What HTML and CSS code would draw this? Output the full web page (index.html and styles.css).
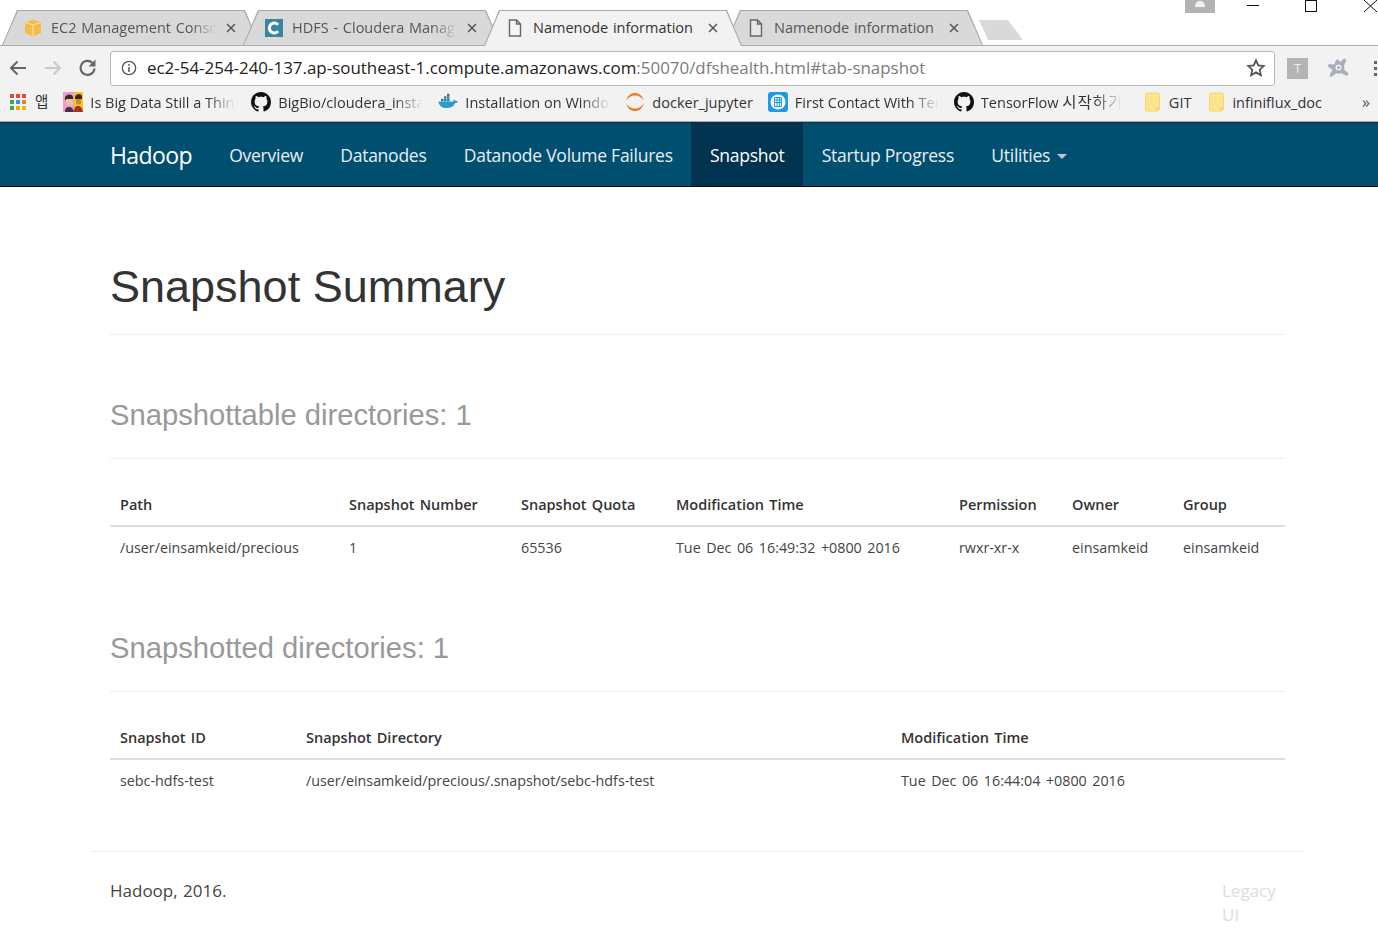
FILE: index.html
```html
<!DOCTYPE html>
<html lang="en">
<head>
    <meta charset="UTF-8">
    <meta name="viewport" content="width=device-width, initial-scale=1.0">
    <title>Namenode information</title>
    <link rel="stylesheet" href="styles.css">
</head>
<body>
    <svg class="sprites" width="0" height="0" aria-hidden="true">
        <symbol id="i-doc" viewBox="0 0 14 18">
            <path d="M1.5 1h7l4 4v12h-11z M8.5 1v4h4" fill="#fff" fill-opacity=".35" stroke="currentColor" stroke-width="1.4"/>
        </symbol>
        <symbol id="i-close" viewBox="0 0 10 10">
            <path d="M1 1l8 8M9 1l-8 8" stroke="currentColor" stroke-width="1.5"/>
        </symbol>
        <symbol id="i-github" viewBox="0 0 16 16">
            <path fill="#111" d="M8 0C3.58 0 0 3.58 0 8c0 3.54 2.29 6.53 5.47 7.59.4.07.55-.17.55-.38 0-.19-.01-.82-.01-1.49-2.01.37-2.53-.49-2.69-.94-.09-.23-.48-.94-.82-1.13-.28-.15-.68-.52-.01-.53.63-.01 1.08.58 1.23.82.72 1.21 1.87.87 2.33.66.07-.52.28-.87.51-1.07-1.78-.2-3.64-.89-3.64-3.95 0-.87.31-1.59.82-2.15-.08-.2-.36-1.02.08-2.12 0 0 .67-.21 2.2.82.64-.18 1.32-.27 2-.27.68 0 1.36.09 2 .27 1.53-1.04 2.2-.82 2.2-.82.44 1.1.16 1.92.08 2.12.51.56.82 1.27.82 2.15 0 3.07-1.87 3.75-3.65 3.95.29.25.54.73.54 1.48 0 1.07-.01 1.93-.01 2.2 0 .21.15.46.55.38A8.013 8.013 0 0016 8c0-4.42-3.58-8-8-8z"/>
        </symbol>
        <symbol id="i-folder" viewBox="0 0 16 20">
            <path d="M1.5 1h11a2 2 0 0 1 2 2v14l-2 2h-11a1 1 0 0 1-1-1V2a1 1 0 0 1 1-1z" fill="#fde58f" stroke="#f6d66e"/>
            <path d="M12 19v-3h2.500" fill="none" stroke="#eec95c"/>
        </symbol>
    </svg>

    <div class="tabstrip">
        <div class="tab">
            <svg class="favicon" viewBox="0 0 18 18">
                <path d="M9 0.500l8 3v10.500l-8 3.500L1 14V3.500z" fill="#f6b94d"/>
                <path d="M1.500 3.500L9 6l7.500-2.500M9 6v11" fill="none" stroke="#fde3a8" stroke-width="1"/>
            </svg>
            <span class="tab-title">EC2 Management Console</span>
            <svg class="tab-close"><use href="#i-close"/></svg>
        </div>
        <div class="tab">
            <svg class="favicon" viewBox="0 0 20 20">
                <rect width="20" height="20" fill="#37859e"/>
                <path d="M14.500 6.500a5.500 5.500 0 1 0 0 7" fill="none" stroke="#fff" stroke-width="3.400"/>
            </svg>
            <span class="tab-title">HDFS - Cloudera Manager</span>
            <svg class="tab-close"><use href="#i-close"/></svg>
        </div>
        <div class="tab tab-active">
            <svg class="favicon doc"><use href="#i-doc"/></svg>
            <span class="tab-title">Namenode information</span>
            <svg class="tab-close"><use href="#i-close"/></svg>
        </div>
        <div class="tab">
            <svg class="favicon doc"><use href="#i-doc"/></svg>
            <span class="tab-title">Namenode information</span>
            <svg class="tab-close"><use href="#i-close"/></svg>
        </div>
        <div class="newtab"></div>
        <div class="window-btns">
            <div class="avatar"><span></span></div>
            <svg class="win-btn" viewBox="0 0 14 13"><path d="M1 5.500h12" stroke="#111"/></svg>
            <svg class="win-btn win-max" viewBox="0 0 14 13"><rect x="1.500" y="0.500" width="11" height="11" fill="none" stroke="#111"/></svg>
            <svg class="win-btn" viewBox="0 0 14 13"><path d="M0 0l13 12M13 0L0 12" stroke="#111"/></svg>
        </div>
    </div>

    <div class="toolbar">
        <svg class="tool-icon" viewBox="0 0 20 20"><path d="M18 10H3M9.500 3.500L3 10l6.500 6.500" fill="none" stroke="#666" stroke-width="2"/></svg>
        <svg class="tool-icon" viewBox="0 0 20 20"><path d="M2 10h15M10.500 3.500L17 10l-6.500 6.500" fill="none" stroke="#c8c8c8" stroke-width="2"/></svg>
        <svg class="tool-icon" viewBox="0 0 20 20"><path d="M16.500 10.500a7 7 0 1 1-2-5.500" fill="none" stroke="#666" stroke-width="2.200"/><path d="M17.500 1.500v7h-7z" fill="#666"/></svg>
        <div class="omnibox">
            <svg class="info" viewBox="0 0 18 18"><circle cx="9" cy="9" r="7.500" fill="none" stroke="#555" stroke-width="1.500"/><path d="M9 8v5.500M9 4.500v2" stroke="#555" stroke-width="1.700"/></svg>
            <span class="url">ec2-54-254-240-137.ap-southeast-1.compute.amazonaws.com<span class="url-rest">:50070/dfshealth.html#tab-snapshot</span></span>
            <svg class="star" viewBox="0 0 20 20"><path d="M10 2.300l2.300 5.100 5.500.6-4.100 3.700 1.200 5.500L10 14.400l-4.900 2.800 1.200-5.500L2.200 8l5.500-.6z" fill="none" stroke="#555" stroke-width="1.800"/></svg>
        </div>
        <div class="ext-t">T</div>
        <svg class="ext-avast" viewBox="0 0 22 20">
            <path d="M17 0.500c1.500 0 2.500 1.500 1.800 3L17 7.500c.5 1.500.5 2.800 0 4l4 3.500c1 1.200-.3 3.200-2 2.500l-5.500-2.500c-1.500.8-3 .8-4.300.2L5 18.500c-1.500.8-3-.8-2-2.300L5.500 12 1.500 9C.3 8 1 6.200 2.500 6.300L7 6.500 9 2.500c.7-1.300 2.300-1.300 3 0l1.300 1.500z" fill="#a9adbd"/>
            <circle cx="11.500" cy="9.500" r="3" fill="#f2f2f2"/>
            <circle cx="11.500" cy="9.500" r="1.500" fill="#a9adbd"/>
        </svg>
        <div class="menu-dots"><span></span><span></span><span></span></div>
    </div>

    <div class="bookmarks">
        <svg class="apps" viewBox="0 0 16 16">
            <rect width="4" height="4" fill="#e8453c"/><rect x="6" width="4" height="4" fill="#e8453c"/><rect x="12" width="4" height="4" fill="#e8453c"/>
            <rect y="6" width="4" height="4" fill="#34a853"/><rect x="6" y="6" width="4" height="4" fill="#3d8df2"/><rect x="12" y="6" width="4" height="4" fill="#f58220"/>
            <rect y="12" width="4" height="4" fill="#34a853"/><rect x="6" y="12" width="4" height="4" fill="#f4a800"/><rect x="12" y="12" width="4" height="4" fill="#f4b400"/>
        </svg>
        <span class="bm-apps">앱</span>
        <div class="bm bm-first">
            <svg class="bm-icon" viewBox="0 0 20 20">
                <rect width="11" height="20" fill="#ee9ad0"/><rect x="11" width="9" height="20" fill="#f5c518"/>
                <path d="M2 6c0-4 7-5 8-1v3H2z" fill="#3a2a22"/>
                <path d="M3 7h7v5c-1 2.500-5 2.500-7 0z" fill="#eac0a8"/>
                <path d="M2 20c0-4 2-5 4-5s4 1 5 5z" fill="#4a3040"/>
                <path d="M12 5c1-4 7-4 7 0v2h-7z" fill="#3a2412"/>
                <path d="M13 7h5v4c-1 2-4 2-5 0z" fill="#c98a3a"/>
                <path d="M11 20c0-5 2-6 4-6s4 1 5 6z" fill="#a5301e"/>
            </svg>
            <span class="bm-text bm-cut w146">Is Big Data Still a Thing</span>
        </div>
        <div class="bm">
            <svg class="bm-icon"><use href="#i-github"/></svg>
            <span class="bm-text bm-cut w145">BigBio/cloudera_install</span>
        </div>
        <div class="bm">
            <svg class="bm-icon" viewBox="0 0 20 20">
                <path d="M0.500 9.500h14.500c.5-1.200 1.500-1.800 2-1.800.5.500.8 1 .8 1.500.8-.2 1.500 0 2 .3-.5 1.300-1.500 1.700-2.700 1.700C15.500 14.500 12.500 16 8.500 16c-5 0-7.500-2.500-8-6.500z" fill="#2f9ac8"/>
                <path d="M3 6.800h2.500v2.400H3zM6 6.800h2.500v2.400H6zM9 6.800h2.500v2.400H9zM6 4.200h2.500v2.200H6zM9 4.200h2.500v2.200H9zM9 1.700h2.500v2.200H9z" fill="#2f7f9f"/>
            </svg>
            <span class="bm-text bm-cut w145">Installation on Windows</span>
        </div>
        <div class="bm">
            <svg class="bm-icon" viewBox="0 0 20 20">
                <path d="M1.500 8.500C3-1.500 17-1.500 18.500 8.500 15 1.800 5 1.800 1.500 8.500zM1.500 11.500C3 21.500 17 21.500 18.500 11.500 15 18.200 5 18.200 1.500 11.500z" fill="#f37726"/>
            </svg>
            <span class="bm-text">docker_jupyter</span>
        </div>
        <div class="bm">
            <svg class="bm-icon" viewBox="0 0 20 20">
                <rect width="20" height="20" rx="3" fill="#1e9be8"/>
                <circle cx="10" cy="10" r="7.500" fill="#fff"/>
                <path d="M6.500 5.500h7v9h-7zM6.500 8h7M6.500 10.500h7M9 5.500v9M11.500 5.500v9" fill="none" stroke="#1e9be8"/>
            </svg>
            <span class="bm-text bm-cut w144">First Contact With TensorFlow</span>
        </div>
        <div class="bm">
            <svg class="bm-icon"><use href="#i-github"/></svg>
            <span class="bm-text bm-cut w141">TensorFlow <span class="ko">시작하기</span></span>
        </div>
        <div class="bm bm-folder">
            <svg class="bm-icon folder"><use href="#i-folder"/></svg>
            <span class="bm-text">GIT</span>
        </div>
        <div class="bm bm-folder2">
            <svg class="bm-icon folder"><use href="#i-folder"/></svg>
            <span class="bm-text">infiniflux_doc</span>
        </div>
        <span class="bm-more">»</span>
    </div>

    <nav class="navbar">
        <a class="brand">Hadoop</a>
        <a class="nav-item">Overview</a>
        <a class="nav-item">Datanodes</a>
        <a class="nav-item">Datanode Volume Failures</a>
        <a class="nav-item active">Snapshot</a>
        <a class="nav-item">Startup Progress</a>
        <a class="nav-item">Utilities <span class="caret"></span></a>
    </nav>

    <div class="container">
        <div class="page-header">
            <h1>Snapshot Summary</h1>
        </div>

        <div class="section-header">
            <h2>Snapshottable directories: 1</h2>
        </div>
        <table>
            <thead>
                <tr>
                    <th class="c-path">Path</th>
                    <th class="c-number">Snapshot Number</th>
                    <th class="c-quota">Snapshot Quota</th>
                    <th class="c-time">Modification Time</th>
                    <th class="c-perm">Permission</th>
                    <th class="c-owner">Owner</th>
                    <th>Group</th>
                </tr>
            </thead>
            <tbody>
                <tr>
                    <td>/user/einsamkeid/precious</td>
                    <td>1</td>
                    <td>65536</td>
                    <td>Tue Dec 06 16:49:32 +0800 2016</td>
                    <td>rwxr-xr-x</td>
                    <td>einsamkeid</td>
                    <td>einsamkeid</td>
                </tr>
            </tbody>
        </table>

        <div class="section-header second">
            <h2>Snapshotted directories: 1</h2>
        </div>
        <table>
            <thead>
                <tr>
                    <th class="c-id">Snapshot ID</th>
                    <th class="c-dir">Snapshot Directory</th>
                    <th>Modification Time</th>
                </tr>
            </thead>
            <tbody>
                <tr>
                    <td>sebc-hdfs-test</td>
                    <td>/user/einsamkeid/precious/.snapshot/sebc-hdfs-test</td>
                    <td>Tue Dec 06 16:44:04 +0800 2016</td>
                </tr>
            </tbody>
        </table>

        <footer class="footer">
            <p class="copyright">Hadoop, 2016.</p>
            <a class="legacy">Legacy UI</a>
        </footer>
    </div>
</body>
</html>
```

FILE: styles.css
```css
* {
    box-sizing: border-box;
}

html, body {
    overflow: hidden;
}

body {
    margin: 0;
    font-family: 'Open Sans', 'Noto Sans CJK KR', sans-serif;
    background-color: #fff;
    color: #333;
}

.sprites {
    display: block;
    height: 0;
}

/* browser tabs */
.tabstrip {
    display: flex;
    align-items: flex-end;
    height: 46px;
    padding-left: 2px;
    background-color: #fff;
    box-shadow: inset 0 -1px 0 #adadad;
}

.tab {
    position: relative;
    display: flex;
    align-items: center;
    flex: none;
    width: 258px;
    height: 35px;
    margin-bottom: 1px;
    margin-right: -17px;
    padding-left: 22px;
    color: #555;
    background-color: #a8a8a8;
    clip-path: polygon(0 100%, 15px 0, 243px 0, 100% 100%);
}

.tab::before {
    content: "";
    position: absolute;
    inset: 1px 1px 0;
    background-color: #d9d9d9;
    clip-path: polygon(0 100%, 15px 0, 241px 0, 100% 100%);
}

.tab > * {
    position: relative;
}

.tab-active {
    z-index: 1;
    height: 36px;
    margin-bottom: 0;
    padding-bottom: 1px;
    color: #333;
}

.tab-active::before {
    background-color: #f2f2f2;
}

.favicon {
    flex: none;
    width: 18px;
    height: 18px;
}

.favicon.doc {
    width: 14px;
    color: #666;
    margin: 0 2px;
}

.tab-title {
    flex: none;
    width: 165px;
    margin-left: 9px;
    font-size: 14.5px;
    word-spacing: 1px;
    white-space: nowrap;
    overflow: hidden;
    -webkit-mask-image: linear-gradient(to right, #000 140px, transparent 165px);
    mask-image: linear-gradient(to right, #000 140px, transparent 165px);
}

.tab-active .tab-title,
.tab:nth-child(4) .tab-title {
    -webkit-mask-image: none;
    mask-image: none;
}

.tab-close {
    flex: none;
    width: 10px;
    height: 10px;
    margin-left: 10px;
    color: #555;
}

.newtab {
    flex: none;
    width: 44px;
    height: 20px;
    margin: 0 0 6px 13px;
    background-color: #d9d9d9;
    clip-path: polygon(0 0, 29px 0, 100% 100%, 9px 100%);
}

.window-btns {
    display: flex;
    align-self: flex-start;
    align-items: flex-start;
    margin-left: auto;
}

.avatar {
    position: relative;
    width: 30px;
    height: 13px;
    margin-right: 31px;
    background-color: #b3b3b3;
    overflow: hidden;
}

.avatar span {
    position: absolute;
    left: 10px;
    top: 1px;
    width: 10px;
    height: 6px;
    border-radius: 5px 5px 0 0;
    background-color: #f0f0f0;
}

.win-btn {
    width: 14px;
    height: 13px;
    margin-right: 44px;
}

.win-max {
    margin-right: 46px;
}

.win-btn:last-child {
    margin-right: 0;
}

/* address bar */
.toolbar {
    display: flex;
    align-items: center;
    height: 44px;
    padding-left: 8px;
    background-color: #f2f2f2;
    overflow: hidden;
}

.tool-icon {
    flex: none;
    width: 20px;
    height: 20px;
    margin-right: 15px;
}

.omnibox {
    display: flex;
    align-items: center;
    flex: none;
    width: 1165px;
    height: 35px;
    margin-left: -3px;
    padding: 0 8px 0 10px;
    background-color: #fff;
    border: 1px solid #b8b8b8;
    border-radius: 3px;
}

.info {
    flex: none;
    width: 16px;
    height: 16px;
}

.url {
    margin-left: 10px;
    margin-bottom: 2px;
    font-size: 16.930px;
    color: #222;
    white-space: nowrap;
}

.url-rest {
    color: #7b7b7b;
}

.star {
    flex: none;
    width: 20px;
    height: 20px;
    margin-left: auto;
}

.ext-t {
    flex: none;
    width: 21px;
    height: 21px;
    margin-left: 12px;
    background-color: #b4b4b4;
    color: #eee;
    font-size: 13px;
    line-height: 21px;
    text-align: center;
}

.ext-avast {
    flex: none;
    width: 22px;
    height: 20px;
    margin-left: 19px;
}

.menu-dots {
    display: flex;
    flex: none;
    flex-direction: column;
    gap: 3px;
    margin-left: 25px;
}

.menu-dots span {
    width: 3px;
    height: 3px;
    background-color: #666;
}

/* bookmarks */
.bookmarks {
    display: flex;
    align-items: center;
    height: 32px;
    padding-left: 10px;
    padding-bottom: 7px;
    background-color: #f2f2f2;
    border-bottom: 1px solid #a8a8a8;
    font-size: 14.500px;
    line-height: 20px;
    color: #333;
}

.apps {
    flex: none;
    width: 16px;
    height: 16px;
}

.bm-apps {
    margin-left: 9px;
}

.bm {
    display: flex;
    align-items: center;
    flex: none;
    margin-left: 15px;
}

.bm-first {
    margin-left: 15px;
}

.bm-folder {
    margin-left: 23px;
}

.bm-folder2 {
    margin-left: 18px;
}

.bm-icon {
    flex: none;
    width: 20px;
    height: 20px;
}

.bm-icon.folder {
    width: 16px;
}

.bm-text {
    margin-left: 7px;
    padding-top: 1px;
    white-space: nowrap;
}

.bm-folder .bm-text {
    margin-left: 8px;
}

.bm-cut {
    overflow: hidden;
    -webkit-mask-image: linear-gradient(to right, #000 80%, transparent 100%);
    mask-image: linear-gradient(to right, #000 80%, transparent 100%);
}

.ko {
    font-size: 15.500px;
    line-height: 1;
    letter-spacing: 1px;
}

.w146 { width: 146px; }
.w145 { width: 145px; }
.w144 { width: 144px; }
.w141 { width: 141px; }

.bm-more {
    margin-left: auto;
    margin-right: 8px;
    font-size: 16px;
    color: #555;
}

/* page */
.navbar {
    display: flex;
    align-items: stretch;
    height: 65px;
    padding-left: 110px;
    background-color: #004f71;
    border-bottom: 1px solid #000;
    border-top: 1px solid #0a3244;
    font-size: 17.500px;
    letter-spacing: -0.25px;
    color: #fff;
}

.brand {
    align-self: center;
    margin-right: 18.600px;
    font-size: 23px;
    letter-spacing: -0.6px;
}

.nav-item {
    display: flex;
    align-items: center;
    padding: 0 18.600px;
    color: #e8eef2;
    white-space: pre;
}

.nav-item.active {
    background-color: #00334f;
    color: #fff;
}

.caret {
    display: inline-block;
    margin-left: 3px;
    margin-top: 3px;
    border-top: 5px solid #bcc8d0;
    border-left: 5px solid transparent;
    border-right: 5px solid transparent;
}

.container {
    width: 1213px;
    margin-left: 91px;
    padding: 0 19px;
}

.page-header {
    margin-top: 72px;
    padding-bottom: 20px;
    border-bottom: 1px solid #eee;
}

h1 {
    margin: 0;
    font-family: 'Liberation Sans', Arial, sans-serif;
    font-size: 45px;
    font-weight: 400;
    line-height: 55px;
    color: #333;
}

.section-header {
    margin-top: 63px;
    padding-bottom: 26px;
    border-bottom: 1px solid #eee;
}

.section-header.second {
    margin-top: 64px;
}

h2 {
    margin: 0;
    font-family: 'Liberation Sans', Arial, sans-serif;
    font-size: 29.200px;
    font-weight: 400;
    line-height: 34px;
    color: #999;
}

table {
    width: 100%;
    margin-top: 24px;
    border-collapse: collapse;
    table-layout: fixed;
    font-size: 14.300px;
    word-spacing: 1.800px;
}

th, td {
    padding: 0 10px;
    text-align: left;
    white-space: nowrap;
}

th {
    height: 43px;
    font-size: 14.500px;
    font-weight: 600;
    word-spacing: 1.500px;
    color: #333;
    border-bottom: 2px solid #ddd;
}

td {
    height: 41px;
    color: #444;
}

.c-path { width: 229px; }
.c-number { width: 172px; }
.c-quota { width: 155px; }
.c-time { width: 283px; }
.c-perm { width: 113px; }
.c-owner { width: 111px; }
.c-id { width: 186px; }
.c-dir { width: 595px; }

.footer {
    display: flex;
    justify-content: space-between;
    margin: 51px -19px 0;
    padding: 27px 19px 0;
    border-top: 1px solid #eee;
    font-size: 17px;
    line-height: 24px;
}

.copyright {
    margin: 0;
    color: #444;
    word-spacing: 1px;
}

.legacy {
    width: 63px;
    color: #ddd;
}
```
